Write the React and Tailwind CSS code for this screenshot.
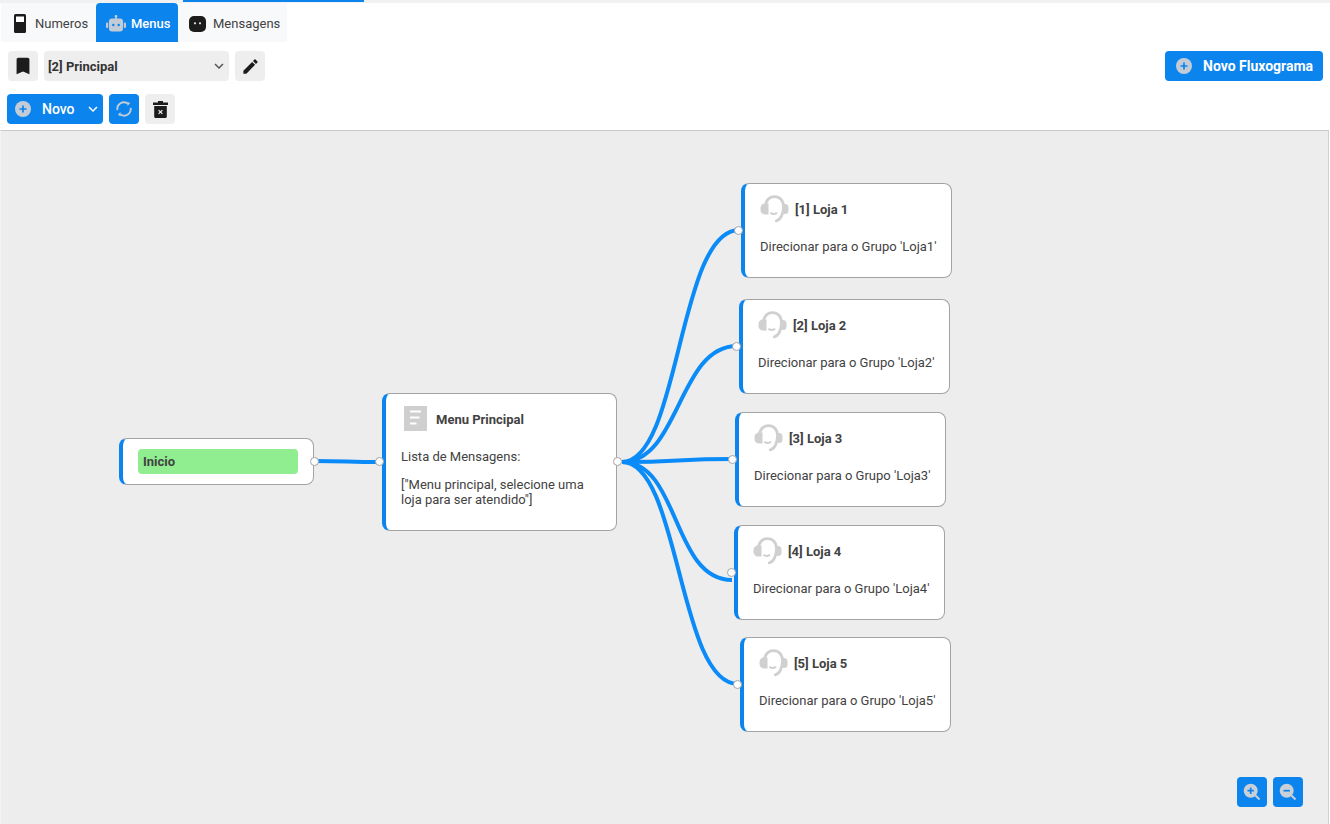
import React from "react";
import { MdBookmark, MdEdit, MdExpandMore } from "react-icons/md";

const PlusCircle = ({ className = "w-[16px] h-[16px]" }) => (
  <svg viewBox="0 0 16 16" className={className}>
    <circle cx="8" cy="8" r="8" fill="#c3ccd6" />
    <path d="M8 4.5v7M4.5 8h7" stroke="#0b84ee" strokeWidth="1.7" />
  </svg>
);

const Sync = () => (
  <svg viewBox="0 0 16 16" className="w-[16px] h-[16px]" fill="none">
    <path d="M1.4 9.2A6.6 6.6 0 0 1 11.4 2.4" stroke="#c3ccd6" strokeWidth="1.8" />
    <path d="M14.6 6.8A6.6 6.6 0 0 1 4.6 13.6" stroke="#c3ccd6" strokeWidth="1.8" />
    <path d="M11 0.8L14.2 2L11.6 5Z" fill="#c3ccd6" />
    <path d="M5 15.2L1.8 14L4.4 11Z" fill="#c3ccd6" />
  </svg>
);

const Trash = () => (
  <svg viewBox="0 0 15 17" className="w-[15px] h-[17px]">
    <path d="M5 0h5v1.5h5v2.5H0V1.5h5z" fill="#1c1c1c" />
    <path d="M1.2 5h12.6v10.5a1.5 1.5 0 0 1-1.5 1.5H2.7a1.5 1.5 0 0 1-1.5-1.5z" fill="#1c1c1c" />
    <path d="M5.6 9.1l3.8 3.8M9.4 9.1l-3.8 3.8" stroke="#eeeeee" strokeWidth="1.3" />
  </svg>
);

const PhoneIcon = () => (
  <svg viewBox="0 0 12 19" className="w-[12px] h-[19px]">
    <rect x="0" y="0" width="12" height="19" rx="1.5" fill="#1c1c1c" />
    <rect x="2" y="2.5" width="8" height="5.5" fill="#fff" />
  </svg>
);

const RobotIcon = () => (
  <svg viewBox="0 0 20 18" className="w-[20px] h-[18px]">
    <rect x="9.2" y="0" width="1.6" height="4" fill="#c3ccd6" />
    <circle cx="10" cy="1.2" r="1.3" fill="#c3ccd6" />
    <rect x="3" y="3.5" width="14" height="13" rx="3" fill="#c3ccd6" />
    <rect x="0" y="7.5" width="2.2" height="5.5" rx="1" fill="#c3ccd6" />
    <rect x="17.8" y="7.5" width="2.2" height="5.5" rx="1" fill="#c3ccd6" />
    <circle cx="7.3" cy="10" r="1.2" fill="#0b84ee" />
    <circle cx="12.7" cy="10" r="1.2" fill="#0b84ee" />
  </svg>
);

const BotFace = () => (
  <svg viewBox="0 0 17 16" className="w-[17px] h-[16px]">
    <path d="M5 0h7a5 5 0 0 1 5 5v6a5 5 0 0 1-5 5H5a5 5 0 0 1-5-5V5a5 5 0 0 1 5-5z" fill="#1c1c1c" />
    <circle cx="6" cy="7.3" r="1.1" fill="#e6e6e6" />
    <circle cx="11" cy="7.3" r="1.1" fill="#e6e6e6" />
  </svg>
);

const DocIcon = () => (
  <svg viewBox="0 0 23 25" className="w-[23px] h-[25px]">
    <rect width="23" height="25" fill="#cfcfcf" />
    <path d="M6 5.5h11M6 11.5h9.5M6 17.5h6.5" stroke="#fff" strokeWidth="2" />
  </svg>
);

const Headset = () => (
  <svg viewBox="0 0 29 28" className="w-[29px] h-[28px]" fill="none">
    <path d="M5.5 11.5C5.5 5.4 9.4 1.6 14.5 1.6s9 3.8 9 9.9c0 7.6-3 13.4-7.2 14.4" stroke="#d0d0d0" strokeWidth="2.8" strokeLinecap="round" />
    <path d="M5 8.5h3.5v11H5a4.5 4.5 0 0 1-4.5-4.5v-2A4.5 4.5 0 0 1 5 8.5z" fill="#d0d0d0" />
    <path d="M24 9h1a3.5 3.5 0 0 1 3.5 3.5v3A3.5 3.5 0 0 1 25 19h-1z" fill="#d0d0d0" />
    <path d="M11 18.2c1.5 0.9 4 0.9 5.5 0" stroke="#d0d0d0" strokeWidth="2" strokeLinecap="round" />
  </svg>
);

const ZoomIcon = ({ minus }) => (
  <svg viewBox="0 0 18 18" className="w-[18px] h-[18px]">
    <circle cx="7.7" cy="7.7" r="7" fill="#c9d0d8" />
    <path d="M12.5 12.5l4 4" stroke="#c9d0d8" strokeWidth="2" />
    <path d={minus ? "M4.5 7.7h6.4" : "M4.5 7.7h6.4M7.7 4.5v6.4"} stroke="#0b84ee" strokeWidth="1.7" />
  </svg>
);

const Handle = ({ x, y }) => (
  <div className="absolute w-[9px] h-[9px] rounded-full bg-white border border-[#a3a3a3]" style={{ left: x - 4, top: y - 131 - 4 }} />
);

const lojas = [
  { n: 1, x: 741, y: 183, h: 95 },
  { n: 2, x: 739, y: 299, h: 95 },
  { n: 3, x: 735, y: 412, h: 95 },
  { n: 4, x: 734, y: 525, h: 95 },
  { n: 5, x: 740, y: 637, h: 95 },
];

const edges = [
  "M314 461 C 347 461, 347 462, 380 462",
  "M622 462 C 680 462, 678 230, 739 230",
  "M622 462 C 680 462, 678 346, 737 346",
  "M622 462 C 680 462, 676 459, 733 459",
  "M622 462 C 680 462, 672 580, 732 580",
  "M622 462 C 680 462, 678 684, 738 684",
];

const Node = ({ x, y, w, h, children }) => (
  <div
    className="absolute bg-white rounded-[8px] border border-[#a3a3a3] border-l-[4px] border-l-[#0b84ee]"
    style={{ left: x, top: y - 131, width: w, height: h }}
  >
    {children}
  </div>
);

const GrayBtn = ({ children }) => (
  <div className="w-[30px] h-[30px] rounded-[4px] bg-[#eeeeee] flex items-center justify-center text-[#1c1c1c]">{children}</div>
);

export default function App() {
  return (
    <div className="w-[1330px] h-[824px] overflow-hidden bg-white flex flex-col font-['Roboto',sans-serif] text-[13px] text-[#424242]">
      <div className="h-[3px] bg-[#f1f1f1] pl-[183px]">
        <div className="w-[181px] h-[2px] bg-[#0b84ee]" />
      </div>

      <div className="h-[39px] flex pl-[1px]">
        <div className="w-[95px] flex items-center gap-[9px] pl-[13px] pt-[2px] bg-[#f8f9fa]">
          <PhoneIcon />
          <span>Numeros</span>
        </div>
        <div className="w-[82px] flex items-center gap-[5px] pl-[10px] pt-[2px] bg-[#0b84ee] rounded-t-[4px] text-white font-medium">
          <RobotIcon />
          <span>Menus</span>
        </div>
        <div className="w-[109px] flex items-center gap-[7px] pl-[11px] pt-[2px] bg-[#f8f9fa]">
          <BotFace />
          <span>Mensagens</span>
        </div>
      </div>

      <div className="h-[30px] mt-[9px] flex items-center pl-[8px] pr-[7px] gap-[6px]">
        <GrayBtn><MdBookmark className="w-[22px] h-[22px]" /></GrayBtn>
        <div className="w-[185px] h-[30px] rounded-[4px] bg-[#eeeeee] flex items-center justify-between pl-[4px] pr-[1px] font-bold text-[#333333]">
          <span className="pt-[1px]">[2] Principal</span>
          <MdExpandMore className="w-[18px] h-[18px] text-[#555555]" />
        </div>
        <GrayBtn><MdEdit className="w-[19px] h-[19px]" /></GrayBtn>
        <div className="ml-auto w-[158px] h-[30px] rounded-[4px] bg-[#0b84ee] flex items-center gap-[11px] pl-[11px] text-white font-bold text-[14px]">
          <PlusCircle />
          <span>Novo Fluxograma</span>
        </div>
      </div>

      <div className="h-[30px] mt-[13px] flex items-center pl-[7px] gap-[6px]">
        <div className="w-[96px] h-[30px] rounded-[4px] bg-[#0b84ee] flex items-center pl-[8px] text-white font-medium text-[14px]">
          <PlusCircle />
          <span className="ml-[11px]">Novo</span>
          <MdExpandMore className="ml-[9px] w-[18px] h-[18px]" />
        </div>
        <div className="w-[30px] h-[30px] rounded-[4px] bg-[#0b84ee] flex items-center justify-center"><Sync /></div>
        <GrayBtn><Trash /></GrayBtn>
      </div>

      <div className="mt-[6px] mr-[1px] flex-1 relative bg-[#ededed] border-t border-[#c9c9c9] border-l border-l-[#f4f4f4] border-r border-r-[#d0d0d0]">
        <svg className="absolute left-[-1px] top-[-131px] pointer-events-none" width="1330" height="824" fill="none">
          {edges.map((d, i) => (
            <path key={i} d={d} stroke="#0a8bf8" strokeWidth="4" />
          ))}
        </svg>

        <div className="absolute inset-0 left-[-1px]">
          <Node x={119} y={438} w={195} h={47}>
            <div className="absolute left-[15px] top-[10px] w-[160px] h-[25px] rounded-[4px] bg-[#90ee90] flex items-center pl-[5px] font-bold">
              Inicio
            </div>
          </Node>

          <Node x={382} y={393} w={235} h={138}>
            <div className="flex items-center gap-[9px] pl-[18px] pt-[12px]">
              <DocIcon />
              <span className="font-bold pt-[2px]">Menu Principal</span>
            </div>
            <div className="pl-[15px] pr-[20px] pt-[18px] leading-[15px]">
              <div>Lista de Mensagens:</div>
              <div className="mt-[13px]">["Menu principal, selecione uma loja para ser atendido"]</div>
            </div>
          </Node>

          {lojas.map((l) => (
            <Node key={l.n} x={l.x} y={l.y} w={211} h={l.h}>
              <div className="flex items-center gap-[6px] pl-[15px] pt-[11px]">
                <Headset />
                <span className="font-bold pt-[2px]">[{l.n}] Loja {l.n}</span>
              </div>
              <div className="pl-[15px] pt-[16px] leading-[15px] whitespace-nowrap">Direcionar para o Grupo 'Loja{l.n}'</div>
            </Node>
          ))}

          <Handle x={314} y={461} />
          <Handle x={379} y={461} />
          <Handle x={617} y={461} />
          <Handle x={738} y={230} />
          <Handle x={736} y={346} />
          <Handle x={732} y={459} />
          <Handle x={731} y={572} />
          <Handle x={737} y={684} />
        </div>

        <div className="absolute right-[25px] bottom-[17px] flex gap-[6px]">
          <div className="w-[30px] h-[30px] rounded-[4px] bg-[#0b84ee] flex items-center justify-center"><ZoomIcon /></div>
          <div className="w-[30px] h-[30px] rounded-[4px] bg-[#0b84ee] flex items-center justify-center"><ZoomIcon minus /></div>
        </div>
      </div>
    </div>
  );
}
